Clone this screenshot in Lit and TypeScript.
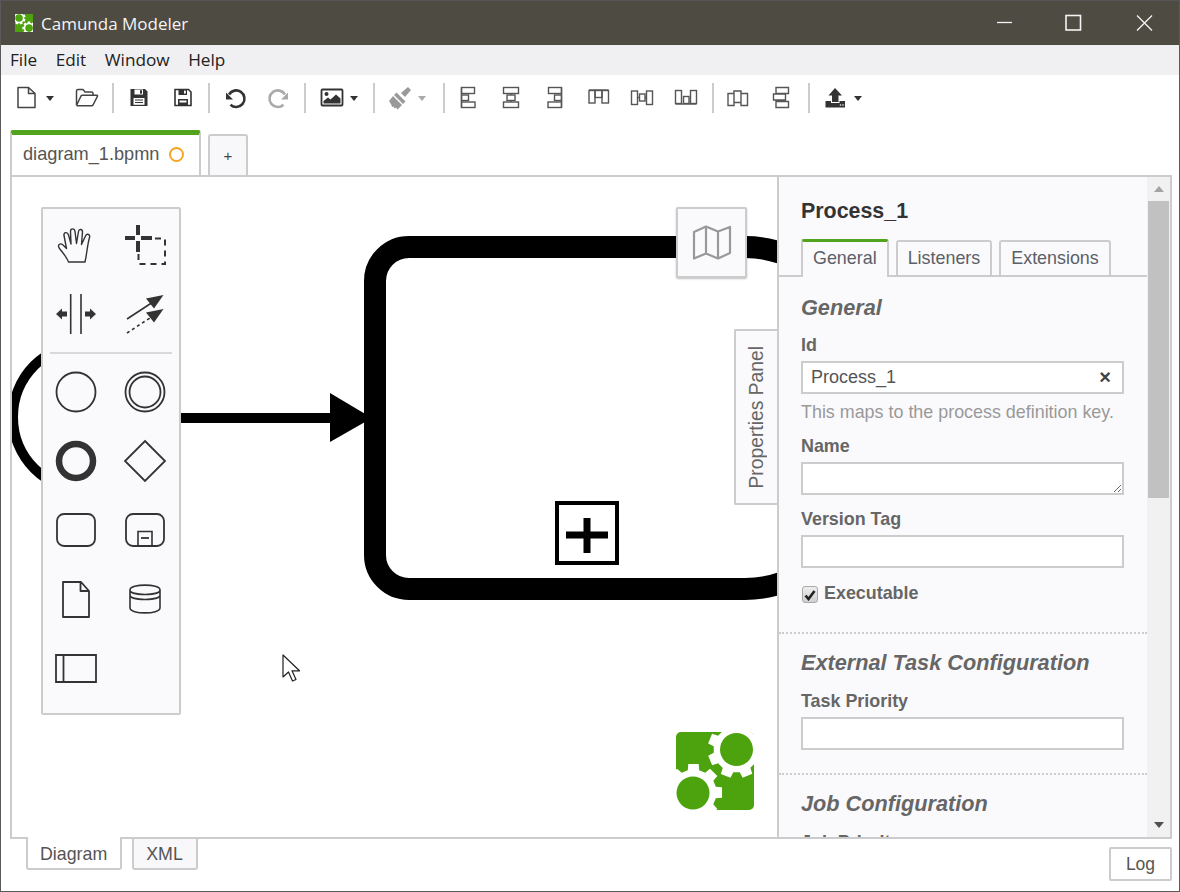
import { LitElement, html, css, svg, nothing } from 'lit';
import { customElement } from 'lit/decorators.js';

// builds the outline of a cog, used by both camunda logos
function gearPath(cx: number, cy: number, ro: number, ri: number, teeth: number, rot = 0): string {
  const pts: string[] = [];
  const step = (Math.PI * 2) / teeth;
  for (let i = 0; i < teeth; i++) {
    const a = rot + i * step;
    const offsets: [number, number][] = [
      [-0.32, ri],
      [-0.23, ro],
      [0.23, ro],
      [0.32, ri],
    ];
    for (const [o, r] of offsets) {
      const t = a + o * step;
      pts.push(`${(cx + Math.cos(t) * r).toFixed(2)} ${(cy + Math.sin(t) * r).toFixed(2)}`);
    }
  }
  return `M${pts.join('L')}Z`;
}

const logo = (size: number, radius: number) => html`
  <svg width=${size} height=${size} viewBox="0 0 78 78">
    <rect width="78" height="78" rx=${radius} fill="#4ca30d"></rect>
    <path d=${gearPath(60.5, 17.5, 29, 23, 8, 0.39)} fill="#fff"></path>
    <path d=${gearPath(17.5, 60.5, 29, 23, 8, 0.0)} fill="#fff"></path>
    <circle cx="60.5" cy="17.5" r="16.5" fill="#4ca30d"></circle>
    <circle cx="17" cy="61" r="16.5" fill="#4ca30d"></circle>
  </svg>
`;

interface Tool {
  w: number;
  icon?: ReturnType<typeof svg>;
  pad?: number;
  caret?: boolean;
  off?: boolean;
}

const box = (x: number, y: number, w: number, h: number) =>
  svg`<rect x=${x} y=${y} width=${w} height=${h} fill="none" stroke="#555" stroke-width="1.4"></rect>`;
const ln = (x1: number, y1: number, x2: number, y2: number) =>
  svg`<line x1=${x1} y1=${y1} x2=${x2} y2=${y2} stroke="#555" stroke-width="1.4"></line>`;

const icons = {
  file: svg`<path d="M2 1.5H12.5L19 7.5V21.5H2Z M12.5 1.5V7.5H19" fill="none" stroke="#444" stroke-width="1.5" stroke-linejoin="round"></path>`,
  open: svg`<path d="M1.5 19.5V5C1.5 4 2 3.5 3 3.5H8L10 6H16.5C17.5 6 18 6.5 18 7.5V9.5 M1.5 19.5L6 10C6.3 9.5 6.6 9.3 7.3 9.3H21.8C22.6 9.3 22.8 9.8 22.4 10.4L18 19C17.7 19.5 17.4 19.7 16.8 19.7H1.5" fill="none" stroke="#444" stroke-width="1.5" stroke-linejoin="round"></path>`,
  save: svg`<path d="M3.5 3H18L20.5 5.5V20H3.5Z" fill="#333"></path><rect x="7.5" y="3.5" width="8.5" height="5" fill="#fff"></rect><rect x="13" y="4.2" width="2" height="3.4" fill="#333"></rect><rect x="6.5" y="12" width="11" height="6.8" fill="#fff"></rect><path d="M8 14H16M8 16.5H16" stroke="#333" stroke-width="1.2"></path>`,
  saveAs: svg`<path d="M4 3.5H17.5L20 6V19.5H4Z" fill="none" stroke="#333" stroke-width="1.6"></path><path d="M7.5 3.5H16V9H7.5Z" fill="#333"></path><rect x="13" y="4.6" width="1.8" height="3" fill="#fff"></rect><path d="M7 13H17V19H7Z" fill="#333"></path><rect x="8.5" y="14.5" width="7" height="2" fill="#fff"></rect>`,
  undo: svg`<path d="M6 8.5A8.3 8.3 0 1 1 7.5 18.8" fill="none" stroke="#333" stroke-width="2.6"></path><path d="M3 6.5V13.5H10Z" fill="#333"></path>`,
  redo: svg`<path d="M18 8.5A8.3 8.3 0 1 0 16.5 18.8" fill="none" stroke="#aaa" stroke-width="2.6"></path><path d="M21 6.5V13.5H14Z" fill="#aaa"></path>`,
  image: svg`<rect x="1.5" y="3.5" width="21" height="16" rx="1" fill="none" stroke="#333" stroke-width="1.8"></rect><circle cx="6.5" cy="8" r="2" fill="#333"></circle><path d="M3.5 17.5V15L8 11.5L10.5 13.5L16 8.5L20.5 12.5V17.5Z" fill="#333"></path>`,
  brush: svg`<path d="M13 7L20 1L23 4L17 11Z" fill="#999"></path><path d="M8.5 6.5L17.5 15.5L15 18L6 9Z" fill="#999"></path><path d="M5 10L14 19L9.5 23.5L8 21.5L6.5 22.5L5.5 20.5L4 21L3.5 19L1 15Z" fill="#999"></path>`,
  alignLeft: svg`${ln(5.5, 1.5, 5.5, 21.5)}${box(5.5, 1.5, 13, 6)}${box(5.5, 9, 7, 5.5)}${box(5.5, 16, 13.5, 5.5)}`,
  alignCenter: svg`${ln(12, 7.5, 12, 9)}${ln(12, 14.5, 12, 16)}${box(4.5, 1.5, 15, 6)}${box(8, 9, 8, 5.5)}${box(4.5, 16, 15, 5.5)}`,
  alignRight: svg`${ln(18.5, 1.5, 18.5, 21.5)}${box(5.5, 1.5, 13, 6)}${box(11.5, 9, 7, 5.5)}${box(5, 16, 13.5, 5.5)}`,
  alignTop: svg`${box(2, 4.5, 6, 12.5)}${box(8, 4.5, 7, 7)}${box(15, 4.5, 6.5, 12.5)}${ln(2, 4, 21.5, 4)}`,
  alignMiddle: svg`${ln(7.5, 11.5, 9.5, 11.5)}${ln(15, 11.5, 16.5, 11.5)}${box(1.5, 5, 6, 13.5)}${box(9.5, 8, 5.5, 7)}${box(16.5, 5, 6, 13.5)}`,
  alignBottom: svg`${box(1.5, 4.5, 6, 13)}${box(9.5, 10.5, 5.5, 7)}${box(16.5, 4.5, 6, 13)}${ln(1.5, 18, 22.5, 18)}`,
  distH: svg`<path d="M2 7.5V19.5H8V7.5ZM8 5V16.5H15V5ZM15 7.5V19.5H21.5V7.5Z" fill="none" stroke="#555" stroke-width="1.4"></path>`,
  distV: svg`<path d="M7 1.5H19.5V7.5H7ZM4.5 8H16.5V14H4.5ZM7 15.5H19.5V21.5H7Z" fill="none" stroke="#555" stroke-width="1.4"></path>`,
  exportIco: svg`<path d="M11 2L18 9.5H14.5V16H8V9.5H4.5Z" fill="#333"></path><path d="M1.5 15H7V17H15.5V15H21V21.5H1.5Z" fill="#333"></path><circle cx="16.5" cy="19" r=".8" fill="#fff"></circle><circle cx="19" cy="19" r=".8" fill="#fff"></circle>`,
};

const TOOLS: (Tool | 'sep' | 'sep-tight')[] = [
  { w: 56, icon: icons.file, pad: 7, caret: true },
  { w: 44, icon: icons.open },
  'sep',
  { w: 44, icon: icons.save },
  { w: 44, icon: icons.saveAs },
  'sep',
  { w: 44, icon: icons.undo },
  { w: 44, icon: icons.redo },
  'sep',
  { w: 61, icon: icons.image, pad: 11, caret: true },
  'sep',
  { w: 62, icon: icons.brush, pad: 10, caret: true, off: true },
  'sep-tight',
  { w: 43.6, icon: icons.alignLeft },
  { w: 43.6, icon: icons.alignCenter },
  { w: 43.6, icon: icons.alignRight },
  { w: 43.6, icon: icons.alignTop },
  { w: 43.6, icon: icons.alignMiddle },
  { w: 43.6, icon: icons.alignBottom },
  { w: 1 },
  'sep',
  { w: 43, icon: icons.distH },
  { w: 43, icon: icons.distV },
  { w: 2 },
  'sep',
  { w: 58, icon: icons.exportIco, pad: 11, caret: true },
];

const palette = {
  hand: svg`<path d="M14.5 39C13 34.5 9 30 5.5 25.5C3 22 6 19.5 9 22L12.5 25.5L10 12.5C9.5 9 13.5 8.5 14.5 12L17 21L16.5 8.5C16.5 5 20.5 5 21 8.5L22.5 20.5L24.5 8.5C25 5.5 28.5 6 28.5 9L27.5 21.5L31.5 13C33 10 36.5 11.5 35.5 14.5C33.5 21 33 30 31 39Z" fill="none" stroke="#333" stroke-width="1.4" stroke-linejoin="round"></path>`,
  lasso: svg`<path d="M2 15H12M18 15H29M15 2V12M15 18V29" stroke="#333" stroke-width="4"></path><path d="M32 15.5H42V41H15.5V31" fill="none" stroke="#333" stroke-width="2" stroke-dasharray="6 5"></path>`,
  space: svg`<path d="M16.7 2V42M27 2V42" stroke="#333" stroke-width="1.6"></path><path d="M2 22L8 16.5V19.5H13V24.5H8V27.5Z M42 22L36 16.5V19.5H31V24.5H36V27.5Z" fill="#333"></path>`,
  connect: svg`<path d="M4 27L30 10" stroke="#333" stroke-width="1.6"></path><path d="M40.5 3L23 6.5L31 16.5Z" fill="#333"></path><path d="M4 41L30 24" stroke="#333" stroke-width="1.6" stroke-dasharray="3 3"></path><path d="M40.5 17L23 20.5L31 30.5Z" fill="#333"></path>`,
  start: svg`<circle cx="22" cy="22" r="19.5" fill="none" stroke="#333" stroke-width="1.8"></circle>`,
  inter: svg`<circle cx="22" cy="22" r="19.5" fill="none" stroke="#333" stroke-width="1.8"></circle><circle cx="22" cy="22" r="15.5" fill="none" stroke="#333" stroke-width="1.8"></circle>`,
  end: svg`<circle cx="22" cy="22" r="17" fill="none" stroke="#333" stroke-width="6.5"></circle>`,
  gateway: svg`<path d="M22 2L42 22L22 42L2 22Z" fill="none" stroke="#333" stroke-width="1.8"></path>`,
  task: svg`<rect x="3" y="6" width="38" height="32" rx="7" fill="none" stroke="#333" stroke-width="1.8"></rect>`,
  sub: svg`<rect x="3" y="6" width="38" height="32" rx="7" fill="none" stroke="#333" stroke-width="1.8"></rect><path d="M15 38V23.5H29V38" fill="none" stroke="#333" stroke-width="1.6"></path><path d="M18 30H26" stroke="#333" stroke-width="1.8"></path>`,
  data: svg`<path d="M9 5H27L35 14V40H9Z M26.5 5V14H35" fill="none" stroke="#333" stroke-width="1.8" stroke-linejoin="round"></path>`,
  store: svg`<path d="M7 13C7 6.5 37 6.5 37 13V31C37 37.5 7 37.5 7 31Z M7 13C7 19 37 19 37 13 M7 18C7 24 37 24 37 18" fill="none" stroke="#333" stroke-width="1.6"></path>`,
  pool: svg`<path d="M2 9H42V36H2Z M9.5 9V36" fill="none" stroke="#333" stroke-width="1.8"></path>`,
};

const PALETTE_TOP = [palette.hand, palette.lasso, palette.space, palette.connect];
const PALETTE_MAIN = [
  palette.start,
  palette.inter,
  palette.end,
  palette.gateway,
  palette.task,
  palette.sub,
  palette.data,
  palette.store,
  palette.pool,
];

@customElement('app-root')
export class AppRoot extends LitElement {
  static styles = css`
    :host {
      display: block;
      width: 1180px;
      height: 892px;
      font-family: 'Liberation Sans', Arial, sans-serif;
      color: #444;
    }
    * {
      box-sizing: border-box;
    }
    .window {
      width: 1180px;
      height: 892px;
      display: flex;
      flex-direction: column;
      background: #fff;
      border: 1px solid #5a5a5a;
      border-top-color: #555;
      overflow: hidden;
    }
    .titlebar {
      height: 44px;
      flex: none;
      background: #4e4b42;
      color: #f4f4f4;
      display: flex;
      align-items: center;
      padding-left: 14px;
      font-family: 'Open Sans', sans-serif;
      font-size: 17px;
    }
    .app-logo {
      display: flex;
      margin-right: 8px;
      transform: scaleX(-1);
    }
    .win-btns {
      margin-left: auto;
      display: flex;
    }
    .win-btns svg {
      display: block;
      width: 71px;
      height: 44px;
      stroke: #f4f4f4;
      fill: none;
      stroke-width: 1.3;
    }
    .menubar {
      height: 30px;
      flex: none;
      background: #f0f0f2;
      display: flex;
      align-items: center;
      gap: 18.5px;
      padding: 0 0 2px 9px;
      font-family: 'Open Sans', sans-serif;
      font-size: 17.2px;
      color: #222;
    }
    .toolbar {
      height: 50px;
      flex: none;
      display: flex;
      align-items: center;
      padding: 0 0 4px 8px;
    }
    .tool {
      flex: none;
      height: 30px;
      display: flex;
      align-items: center;
      justify-content: center;
    }
    .tool.split {
      justify-content: flex-start;
    }
    .tool svg.ico {
      display: block;
      width: 24px;
      height: 24px;
      flex: none;
    }
    .caret {
      flex: none;
      margin-left: 6px;
      width: 0;
      height: 0;
      border: 4.5px solid transparent;
      border-top: 5px solid #333;
      border-bottom: 0;
    }
    .tool.off .caret {
      border-top-color: #aaa;
    }
    .sep {
      flex: none;
      width: 2px;
      height: 30px;
      margin: 0 3px;
      background: #ccc;
    }
    .sep.tight {
      margin-right: 1px;
    }
    .tabs {
      height: 50px;
      flex: none;
      display: flex;
      align-items: flex-end;
      padding-left: 9px;
      gap: 7px;
    }
    .doc-tab {
      width: 191px;
      height: 45px;
      background: #fff;
      border: 2px solid #ccc;
      border-top: 5px solid #52a31d;
      border-bottom: 0;
      border-radius: 3px 3px 0 0;
      display: flex;
      align-items: center;
      padding: 0 0 2px 11px;
      font-size: 18.2px;
      color: #555;
    }
    .dot {
      width: 15px;
      height: 15px;
      margin-left: 9px;
      border: 2px solid #f5a623;
      border-radius: 50%;
    }
    .add-tab {
      width: 40px;
      height: 41px;
      background: #f8f8fb;
      border: 2px solid #ccc;
      border-bottom: 0;
      border-radius: 3px 3px 0 0;
      display: flex;
      align-items: center;
      justify-content: center;
      font-size: 15px;
      color: #444;
    }
    .main {
      flex: 1;
      min-height: 0;
      margin: 0 7px 0 9px;
      border: 2px solid #ccc;
      display: flex;
      position: relative;
    }
    .canvas {
      flex: 1;
      min-width: 0;
      position: relative;
      overflow: hidden;
      background: #fff;
    }
    .diagram {
      position: absolute;
      left: -12px;
      top: -177px;
    }
    .palette {
      position: absolute;
      left: 29px;
      top: 30px;
      width: 140px;
      height: 508px;
      background: #fafafd;
      border: 2px solid #ccc;
      border-radius: 2px;
      padding-top: 1px;
    }
    .pal-grid {
      display: grid;
      grid-template-columns: 69px 69px;
      grid-auto-rows: 69px;
      margin-left: -1.5px;
    }
    .pal-grid div {
      display: flex;
      align-items: center;
      justify-content: center;
    }
    .pal-grid svg {
      display: block;
      width: 44px;
      height: 44px;
    }
    .pal-sep {
      height: 2px;
      margin: 4px 7px 3.5px;
      background: #d8d8d8;
    }
    .minimap {
      position: absolute;
      left: 664px;
      top: 30px;
      width: 71px;
      height: 71px;
      background: #fafafd;
      border: 2px solid #ccc;
      border-radius: 2px;
      box-shadow: 0 1px 2px rgba(0, 0, 0, 0.25);
      display: flex;
      align-items: center;
      justify-content: center;
    }
    .toggle {
      position: absolute;
      right: -2px;
      top: 152px;
      width: 45px;
      height: 176px;
      padding-right: 2px;
      background: #fafafd;
      border: 2px solid #ccc;
      border-right: 0;
      border-radius: 2px 0 0 2px;
      display: flex;
      align-items: center;
      justify-content: center;
      font-size: 19.3px;
      color: #666;
    }
    .toggle span {
      writing-mode: vertical-rl;
      transform: rotate(180deg);
    }
    .brand {
      position: absolute;
      left: 664px;
      top: 555px;
    }
    .cursor {
      position: absolute;
      left: 269px;
      top: 476px;
    }
    .panel {
      flex: none;
      width: 393px;
      display: flex;
      background: #fafafd;
      border-left: 2px solid #ccc;
      position: relative;
      overflow: hidden;
    }
    .props {
      width: 368px;
      flex: none;
      overflow: hidden;
      font-size: 17.9px;
      color: #666;
    }
    .props h1 {
      margin: 22px 0 0 22px;
      font-size: 21.4px;
      line-height: 24px;
      color: #333;
    }
    .prop-tabs {
      margin-top: 16px;
      height: 38px;
      display: flex;
      gap: 7px;
      padding-left: 22px;
      border-bottom: 2px solid #ccc;
    }
    .prop-tab {
      height: 36px;
      margin-top: 1px;
      border: 2px solid #ccc;
      border-bottom: 0;
      border-radius: 3px 3px 0 0;
      padding: 0 10px 2px;
      display: flex;
      align-items: center;
      color: #5a6068;
    }
    .prop-tab.active {
      height: 38px;
      margin-top: 0;
      border-top: 3px solid #52a31d;
      background: #fafafd;
      position: relative;
    }
    .section {
      padding: 16px 22px 23px;
      border-bottom: 2px dotted #ccc;
    }
    .section.first {
      padding-top: 18px;
      padding-bottom: 30px;
    }
    .section h2 {
      margin: 0;
      font-size: 21.7px;
      line-height: 26px;
      font-style: italic;
      font-weight: bold;
      color: #666;
    }
    .field {
      margin-top: 14px;
    }
    h2 + .field {
      margin-top: 15px;
    }
    .section.first h2 + .field {
      margin-top: 14px;
    }
    .field label {
      display: block;
      line-height: 20px;
      font-weight: bold;
      margin-bottom: 6px;
    }
    .control {
      position: relative;
      width: 323px;
    }
    .control input,
    .control textarea {
      display: block;
      width: 323px;
      height: 33px;
      margin: 0;
      border: 2px solid #ccc;
      border-radius: 0;
      background: #fff;
      font: 18px 'Liberation Sans', Arial, sans-serif;
      color: #555;
      padding: 0 8px;
      outline: none;
    }
    .clear {
      position: absolute;
      right: 13px;
      top: 7px;
      font-size: 20px;
      line-height: 18px;
      font-weight: bold;
      color: #444;
    }
    .hint {
      margin-top: 8px;
      line-height: 20px;
      color: #999;
    }
    .check {
      margin-top: 16px;
      display: flex;
      align-items: center;
      height: 18px;
      font-weight: bold;
    }
    .box {
      width: 16px;
      height: 17px;
      margin: 3px 6px 0 1px;
      border: 1px solid #aaa;
      border-radius: 3px;
      background: linear-gradient(#eee, #d0d0d0);
      display: flex;
      align-items: center;
      justify-content: center;
    }
    .scrollbar {
      flex: 1;
      background: #f1f1f1;
      display: flex;
      flex-direction: column;
      align-items: center;
    }
    .thumb {
      width: 21px;
      height: 297px;
      background: #c1c1c1;
    }
    .arrow {
      height: 24px;
      display: flex;
      align-items: center;
      justify-content: center;
    }
    .arrow::before {
      content: '';
      border: 5.5px solid transparent;
      border-bottom: 6px solid #a3a3a3;
      border-top: 0;
    }
    .arrow.down {
      margin-top: auto;
    }
    .arrow.down::before {
      border-bottom: 0;
      border-top: 6px solid #505050;
    }
    .footer {
      height: 52px;
      flex: none;
      display: flex;
      align-items: flex-start;
      padding: 0 7px 0 25px;
      gap: 10px;
      position: relative;
      z-index: 2;
    }
    .view-tab {
      margin-top: -2px;
      height: 33px;
      border: 2px solid #ccc;
      border-top: 0;
      border-radius: 0 0 3px 3px;
      padding: 4px 13px 0 12px;
      display: flex;
      align-items: center;
      font-size: 17.8px;
      color: #555;
      background: #f8f8fb;
    }
    .view-tab.active {
      background: #fff;
    }
    .view-tab + .view-tab {
      margin-top: 0;
      height: 31px;
      padding-top: 2px;
    }
    .log {
      margin: 8px 0 0 auto;
      width: 63px;
      height: 34px;
      border: 2px solid #ccc;
      border-radius: 2px;
      display: flex;
      align-items: center;
      justify-content: center;
      font-size: 17.5px;
      color: #555;
    }
  `;

  private renderTool(t: Tool | 'sep' | 'sep-tight') {
    if (t === 'sep') return html`<div class="sep"></div>`;
    if (t === 'sep-tight') return html`<div class="sep tight"></div>`;
    const cls = `tool ${t.caret ? 'split' : ''} ${t.off ? 'off' : ''}`;
    const pad = t.pad ? `padding-left:${t.pad}px;` : '';
    return html`<div class=${cls} style="width:${t.w}px;${pad}">
      ${t.icon ? html`<svg class="ico" viewBox="0 0 24 24">${t.icon}</svg>` : nothing}
      ${t.caret ? html`<span class="caret"></span>` : nothing}
    </div>`;
  }

  private renderDiagram() {
    return html`<svg class="diagram" width="1180" height="892" viewBox="0 0 1180 892">
      <circle cx="86" cy="417" r="73" fill="none" stroke="#000" stroke-width="10"></circle>
      <path
        d="M375 281A34 34 0 0 1 409 247H745Q775 247 800 262V574Q775 589 745 589H409A34 34 0 0 1 375 555Z"
        fill="#fff"
        stroke="#000"
        stroke-width="22"
      ></path>
      <path d="M181 418H335" stroke="#000" stroke-width="10"></path>
      <path d="M330 393L372 418L330 442Z" fill="#000"></path>
      <rect x="557" y="503" width="60" height="60" fill="#fff" stroke="#000" stroke-width="4"></rect>
      <path d="M587 518V553M566 535H608" stroke="#000" stroke-width="7"></path>
    </svg>`;
  }

  render() {
    return html`
      <div class="window">
        <div class="titlebar">
          <span class="app-logo">${logo(18, 0)}</span>
          <span>Camunda Modeler</span>
          <div class="win-btns">
            <svg viewBox="0 0 71 44"><path d="M31 21.5H46"></path></svg>
            <svg viewBox="0 0 71 44"><rect x="29" y="14.5" width="14.5" height="14.5" stroke-width="1.6"></rect></svg>
            <svg viewBox="0 0 71 44"><path d="M29 14.5L44 29.5M44 14.5L29 29.5"></path></svg>
          </div>
        </div>
        <div class="menubar">
          <span>File</span><span>Edit</span><span>Window</span><span>Help</span>
        </div>
        <div class="toolbar">${TOOLS.map((t) => this.renderTool(t))}</div>
        <div class="tabs">
          <div class="doc-tab"><span>diagram_1.bpmn</span><span class="dot"></span></div>
          <div class="add-tab">+</div>
        </div>
        <div class="main">
          <div class="canvas">
            ${this.renderDiagram()}
            <div class="palette">
              <div class="pal-grid">
                ${PALETTE_TOP.map((p) => html`<div><svg viewBox="0 0 44 44">${p}</svg></div>`)}
              </div>
              <div class="pal-sep"></div>
              <div class="pal-grid">
                ${PALETTE_MAIN.map((p) => html`<div><svg viewBox="0 0 44 44">${p}</svg></div>`)}
              </div>
            </div>
            <div class="minimap">
              <svg width="40" height="36" viewBox="0 0 40 36">
                <path
                  d="M2 7L14 1.5L26 6.5L38 2V28L26 33.5L14 28.5L2 33.5Z M14 1.5V28.5 M26 6.5V33.5"
                  fill="none"
                  stroke="#999"
                  stroke-width="2.2"
                  stroke-linejoin="round"
                ></path>
              </svg>
            </div>
            <div class="toggle"><span>Properties Panel</span></div>
            <div class="brand">${logo(78, 5)}</div>
            <svg class="cursor" width="22" height="30" viewBox="0 0 22 30">
              <path
                d="M2 2V24L7.5 19L11.5 28L15 26.5L11 17.8H18.5Z"
                fill="#fff"
                stroke="#222"
                stroke-width="1.2"
                stroke-linejoin="round"
              ></path>
            </svg>
          </div>
          <div class="panel">
            <div class="props">
              <h1>Process_1</h1>
              <div class="prop-tabs">
                <div class="prop-tab active">General</div>
                <div class="prop-tab">Listeners</div>
                <div class="prop-tab">Extensions</div>
              </div>
              <div class="section first">
                <h2>General</h2>
                <div class="field">
                  <label>Id</label>
                  <div class="control">
                    <input value="Process_1" />
                    <span class="clear">×</span>
                  </div>
                  <div class="hint">This maps to the process definition key.</div>
                </div>
                <div class="field">
                  <label>Name</label>
                  <div class="control"><textarea></textarea></div>
                </div>
                <div class="field">
                  <label>Version Tag</label>
                  <div class="control"><input /></div>
                </div>
                <div class="check">
                  <span class="box">
                    <svg width="12" height="12" viewBox="0 0 12 12">
                      <path d="M1.5 6.5L4.5 10L10.5 2" fill="none" stroke="#222" stroke-width="2.6"></path>
                    </svg>
                  </span>
                  Executable
                </div>
              </div>
              <div class="section">
                <h2>External Task Configuration</h2>
                <div class="field">
                  <label>Task Priority</label>
                  <div class="control"><input /></div>
                </div>
              </div>
              <div class="section">
                <h2>Job Configuration</h2>
                <div class="field">
                  <label>Job Priority</label>
                  <div class="control"><input /></div>
                </div>
              </div>
            </div>
            <div class="scrollbar">
              <div class="arrow"></div>
              <div class="thumb"></div>
              <div class="arrow down"></div>
            </div>
          </div>
        </div>
        <div class="footer">
          <div class="view-tab active">Diagram</div>
          <div class="view-tab">XML</div>
          <div class="log">Log</div>
        </div>
      </div>
    `;
  }
}
